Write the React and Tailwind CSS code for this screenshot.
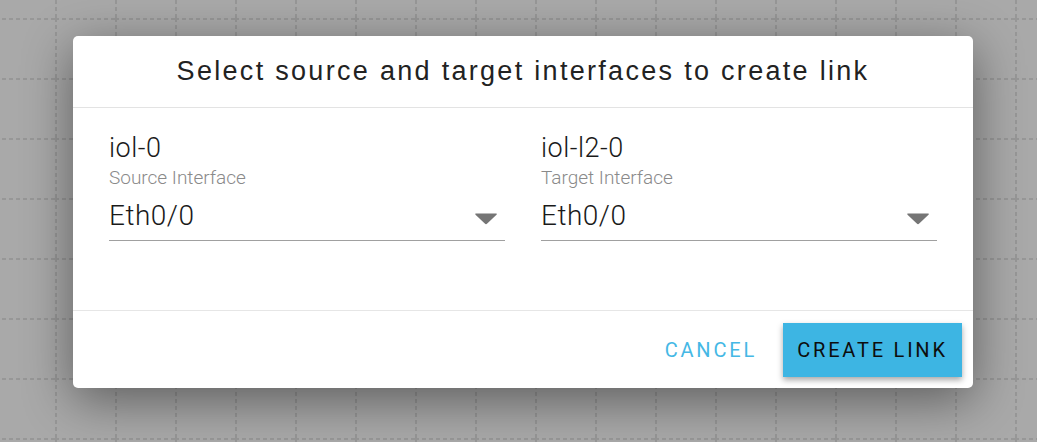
import React from 'react'

function Grid() {
  return (
    <svg className="absolute inset-0 h-full w-full" xmlns="http://www.w3.org/2000/svg">
      <defs>
        <pattern id="grid" x="55" y="18" width="60" height="60" patternUnits="userSpaceOnUse">
          <line x1="0" y1="1" x2="60" y2="1" stroke="#979797" strokeWidth="2" strokeDasharray="4 3" />
          <line x1="1" y1="0" x2="1" y2="60" stroke="#979797" strokeWidth="2" strokeDasharray="4 3" />
        </pattern>
      </defs>
      <rect width="100%" height="100%" fill="url(#grid)" />
    </svg>
  )
}

function Caret() {
  return (
    <svg width="24" height="13" viewBox="0 0 24 13" className="mt-[4px] shrink-0">
      <path d="M2 1.5 H22 Q23.5 1.5 22.5 2.7 L13.2 11.6 Q12 12.7 10.8 11.6 L1.5 2.7 Q0.5 1.5 2 1.5 Z" fill="#757575" />
    </svg>
  )
}

function InterfaceSelect({ device, label, value }) {
  return (
    <div className="flex flex-col font-light">
      <div className="text-[27px] leading-[32px] tracking-[0.5px] text-[#1a1a1a]">{device}</div>
      <div className="mt-[2px] text-[19px] leading-[24px] text-[#8a8a8a]">{label}</div>
      <div className="mt-[10px] flex items-center justify-between border-b border-[#a0a0a0] pb-[8px] pr-[7px]">
        <span className="text-[28px] leading-[32px] tracking-[0.5px] text-[#1a1a1a]">{value}</span>
        <Caret />
      </div>
    </div>
  )
}

export default function App() {
  return (
    <div className="relative h-[442px] w-[1037px] overflow-hidden bg-[#a9a9a9]" style={{ fontFamily: 'Roboto, "Noto Sans", sans-serif' }}>
      <Grid />
      <div className="relative pl-[73px] pt-[36px]">
        <div className="flex w-[900px] flex-col rounded-[5px] bg-white shadow-[0_12px_50px_rgba(0,0,0,0.45)]">
          <div className="flex h-[72px] items-center justify-center border-b border-[#e3e3e3]">
            <h1 className="text-[27px] tracking-[2.3px] text-[#222]" style={{ fontFamily: '"Liberation Sans", Arial, sans-serif' }}>
              Select source and target interfaces to create link
            </h1>
          </div>
          <div className="grid h-[202px] grid-cols-2 gap-x-[36px] px-[36px] pt-[24px]">
            <InterfaceSelect device="iol-0" label="Source Interface" value="Eth0/0" />
            <InterfaceSelect device="iol-l2-0" label="Target Interface" value="Eth0/0" />
          </div>
          <div className="flex h-[78px] items-center justify-end gap-[26px] border-t border-[#e6e6e6] pr-[11px]">
            <button className="text-[20px] tracking-[2.8px] text-[#45b8e5]">CANCEL</button>
            <button className="h-[54px] w-[179px] bg-[#3db5e3] text-[20px] tracking-[2.8px] text-[#0d0d0d] shadow-[0_3px_6px_rgba(0,0,0,0.35)]">
              CREATE LINK
            </button>
          </div>
        </div>
      </div>
    </div>
  )
}
